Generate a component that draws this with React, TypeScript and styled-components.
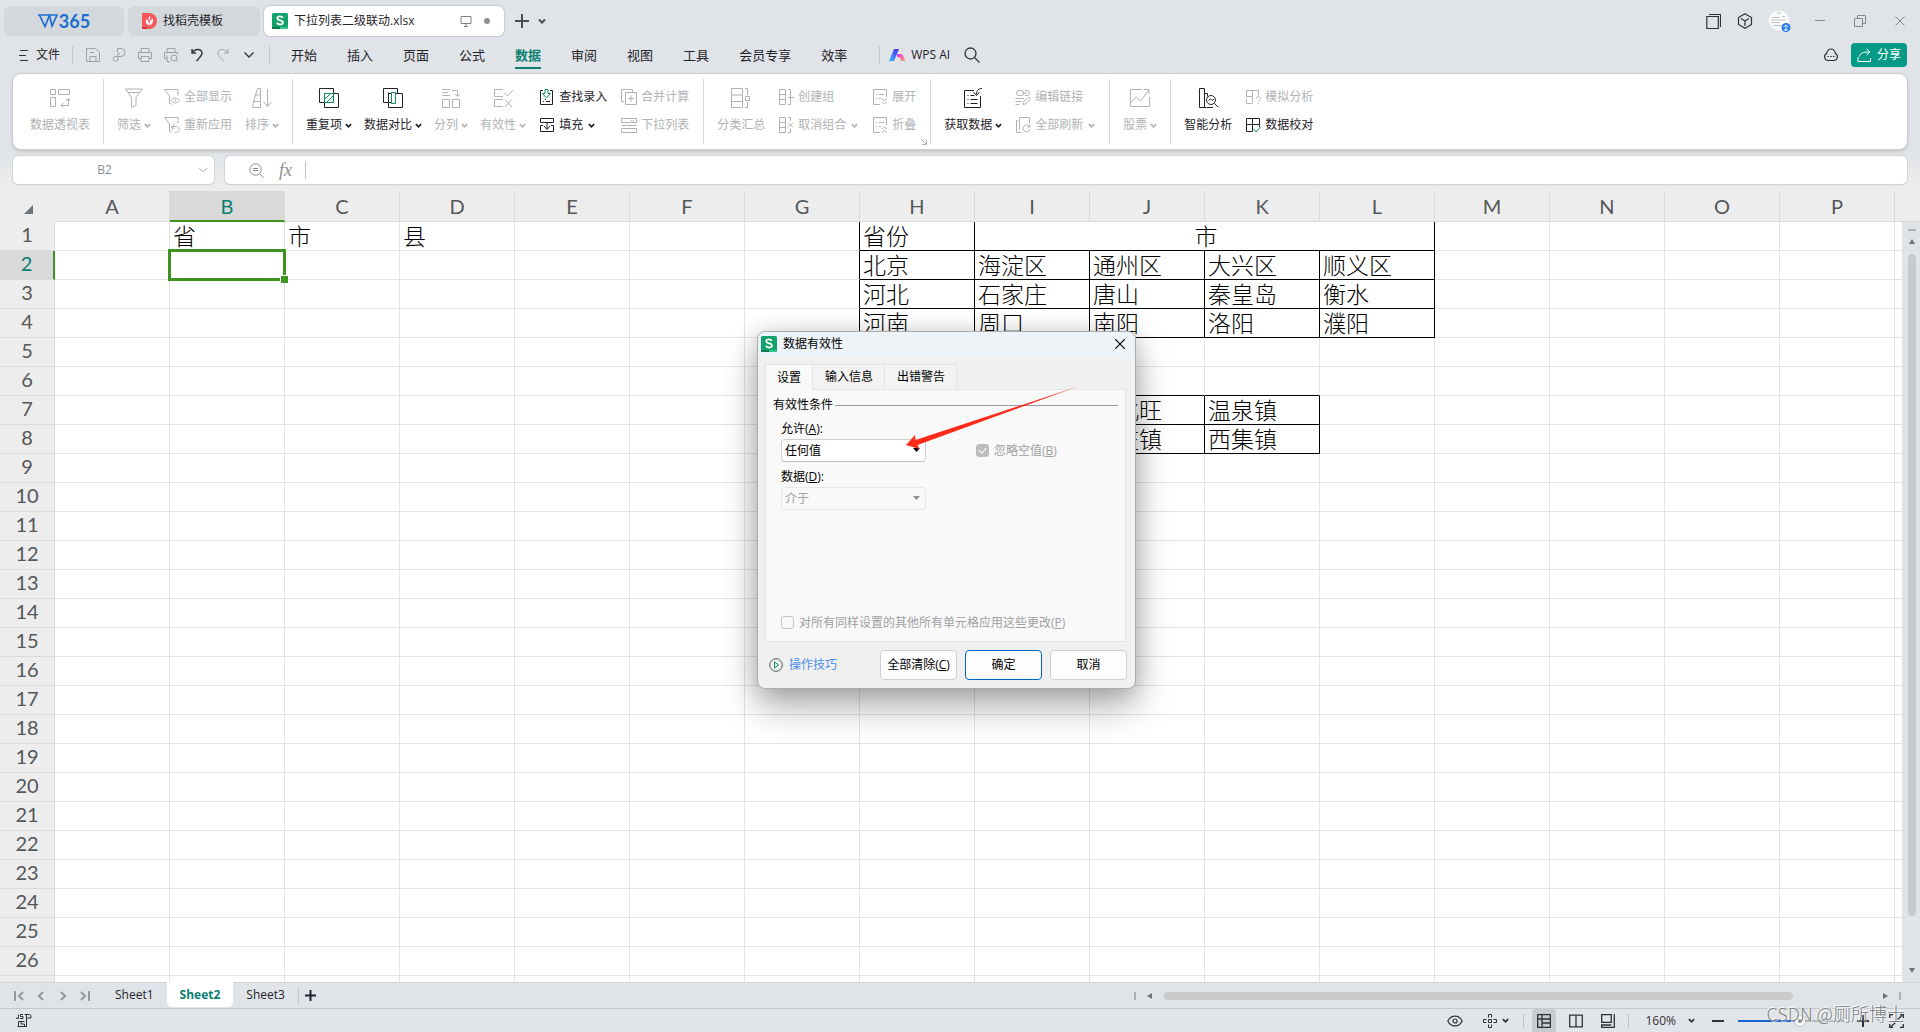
import React from "react";
import styled, { createGlobalStyle, css } from "styled-components";

const ui = `"Open Sans", "Noto Sans CJK SC", sans-serif`;
const ink = "#1f2329";
const muted = "#b0b2b4";
const green = "#0a8071";
const pick = "#3f9320";

const Global = createGlobalStyle`
  * { box-sizing: border-box; }
  body { margin: 0; font-family: ${ui}; font-size: 12px; line-height: 16px; color: ${ink}; }
  button, input, select { font: inherit; color: inherit; margin: 0; }
  button { border: 0; background: none; padding: 0; }
  svg { display: block; flex: none; }
`;

const App = styled.div`
  position: relative;
  display: flex;
  flex-direction: column;
  height: 100vh;
  overflow: hidden;
  background: linear-gradient(#e0e4e8 0, #e0e4e8 150px, #ededed 190px);
  white-space: nowrap;
`;

/* ---------- icons ---------- */

type IconProps = { w?: number; h?: number; d: string; accent?: string; color?: string; sw?: number };

function Icon({ w = 16, h, d, accent, color = "currentColor", sw = 1 }: IconProps) {
  const hh = h ?? w;
  return (
    <svg width={w} height={hh} viewBox={`0 0 ${w} ${hh}`} fill="none" stroke={color} strokeWidth={sw} aria-hidden="true">
      <path d={d} />
      {accent && <path d={accent} stroke="#0f9063" />}
    </svg>
  );
}

const Chevron = ({ w = 7, color = "currentColor", sw = 2 }: { w?: number; color?: string; sw?: number }) => (
  <svg width={w} height={w} viewBox="0 0 8 8" fill="none" stroke={color} strokeWidth={sw} aria-hidden="true">
    <path d="M1 2.5l3 3 3-3" />
  </svg>
);

const SheetLogo = () => (
  <svg width="16" height="16" viewBox="0 0 16 16" aria-hidden="true">
    <rect width="16" height="16" rx="1.5" fill="#12a06b" />
    <path d="M0 14h8v2H1.500A1.500 1.500 0 0 1 0 14z" fill="#0b7a50" />
    <path d="M8 14h8a1.500 1.500 0 0 1-1.500 2H8z" fill="#35c58d" />
    <path d="M10.800 4.800C10.300 3.700 9.200 3.300 8 3.300c-1.600 0-2.700.7-2.700 2 0 2.900 5.600 1.300 5.600 4.100 0 1.400-1.300 2.100-2.900 2.100-1.400 0-2.600-.5-3-1.700" fill="none" stroke="#fff" strokeWidth="1.800" />
  </svg>
);

/* ---------- title bar ---------- */

const TitleBar = styled.header`
  display: flex;
  align-items: center;
  height: 37px;
  padding: 5px 15px 0 4px;
  gap: 4px;
`;

const DocTab = styled.button<{ $w: number; $active?: boolean }>`
  display: flex;
  align-items: center;
  width: ${(p) => p.$w}px;
  height: 30px;
  padding: 0 8px;
  gap: 6px;
  border-radius: 6px;
  background: ${(p) => (p.$active ? "#fff" : "#d3d8dc")};
  ${(p) => p.$active && css`box-shadow: 0 0 2px rgba(0, 0, 0, 0.35);`}
`;

const Home = styled(DocTab)`
  justify-content: center;
  gap: 0;
  color: #1b6fd0;
  font: 18px/20px Lato, sans-serif;
  font-weight: 700;
`;

const Template = styled(DocTab)`
  padding-left: 14px;
`;

const Spacer = styled.div`
  flex: 1;
`;

const TabTools = styled.div`
  display: flex;
  align-items: center;
  gap: 9px;
  padding-left: 7px;
  color: #4a4d50;
`;

const WindowTools = styled.div<{ $gap: number; $dark?: boolean }>`
  display: flex;
  align-items: center;
  gap: ${(p) => p.$gap}px;
  color: ${(p) => (p.$dark ? "#2e3236" : "#85888b")};
`;

/* ---------- menu ---------- */

const MenuBar = styled.nav`
  display: flex;
  align-items: center;
  height: 37px;
  padding: 0 13px 1px 19px;
`;

const FileButton = styled.button`
  display: flex;
  align-items: center;
  gap: 8px;
  width: 53px;
`;

const Rule = styled.span<{ $l?: number; $r?: number }>`
  width: 1px;
  height: 18px;
  margin: 0 ${(p) => p.$r ?? 0}px 0 ${(p) => p.$l ?? 0}px;
  background: #c3c7ca;
`;

const QuickButton = styled.button<{ $dim?: boolean }>`
  display: flex;
  justify-content: center;
  width: 26px;
  color: ${(p) => (p.$dim ? "#9da1a4" : "#33373a")};
`;

const MenuTab = styled.button<{ $on?: boolean }>`
  position: relative;
  padding: 4px 15px;
  font-size: 13px;
  line-height: 20px;
  color: ${(p) => (p.$on ? green : ink)};
  font-weight: ${(p) => (p.$on ? 700 : 400)};
  ${(p) =>
    p.$on &&
    css`
      &::after {
        content: "";
        position: absolute;
        left: 15px;
        right: 15px;
        bottom: 0;
        height: 2px;
        background: ${green};
      }
    `}
`;

const AiButton = styled.button`
  display: flex;
  align-items: center;
  gap: 6px;
  margin-right: 14px;
`;

const ShareButton = styled.button`
  display: flex;
  align-items: center;
  gap: 5px;
  height: 24px;
  padding: 0 6px;
  margin-left: 12px;
  border-radius: 4px;
  background: #049a85;
  color: #fff;
`;

/* ---------- ribbon ---------- */

const Ribbon = styled.section`
  display: flex;
  height: 75px;
  margin: 0 13px;
  border-radius: 8px;
  background: #fff;
  box-shadow: 0 0 1px 1px #c9cdd0, 0 2px 3px 1px rgba(0, 0, 0, 0.12);
`;

const Group = styled.div<{ $first?: boolean }>`
  position: relative;
  display: flex;
  gap: 12px;
  padding: 14px 13px 0 ${(p) => (p.$first ? 17 : 13)}px;
  &:not(:last-child)::after {
    content: "";
    position: absolute;
    right: -1px;
    top: 5px;
    bottom: 5px;
    width: 1px;
    background: #d4d6d8;
  }
  & + & {
    margin-left: 1px;
  }
`;

const Big = styled.button<{ $dim?: boolean }>`
  display: flex;
  flex-direction: column;
  align-items: center;
  align-self: flex-start;
  gap: 9px;
  color: ${(p) => (p.$dim ? muted : ink)};
`;

const Label = styled.span<{ $gap?: number }>`
  display: flex;
  align-items: center;
  gap: ${(p) => p.$gap ?? 3}px;
  line-height: 16px;
`;

const Column = styled.div`
  display: flex;
  flex-direction: column;
  gap: 12px;
  padding: 1px 1px 0;
`;

const Small = styled.button<{ $dim?: boolean }>`
  display: flex;
  align-items: center;
  gap: 4px;
  color: ${(p) => (p.$dim ? muted : ink)};
`;

const Launcher = styled.span`
  position: absolute;
  right: 3px;
  bottom: 4px;
  color: ${muted};
`;

type Cmd = { t: string; d: string; a?: string; drop?: boolean; dim?: boolean };

const BigCmd = ({ t, d, a, drop, dim }: Cmd) => (
  <Big $dim={dim}>
    <Icon w={20} d={d} accent={a} />
    <Label>
      {t}
      {drop && <Chevron />}
    </Label>
  </Big>
);

const SmallCmd = ({ t, d, a, drop, dim }: Cmd) => (
  <Small $dim={dim}>
    <Icon w={16} d={d} accent={a} />
    <Label $gap={5}>
      {t}
      {drop && <Chevron />}
    </Label>
  </Small>
);

const I = {
  pivot: "M.5 1.500h5v5h-5zM8.500 1.500h11v5h-11zM.5 9.500h5v9h-5zM11 17.500h7.500v-7M13.500 15l-2.500 2.500 2.500 2.500M16 13l2.500-2.500L20 13",
  funnel: "M1.500 1h17l-6.500 8v8.500l-4.500 2V9zM4 4.500h12",
  funnelEye: "M14 6.500V.5H.5l5 6.500v7l2 1.500M7 11.500c2-3.300 6-3.300 8.500 0-2.500 3.300-6.500 3.300-8.500 0zM11.200 10.500v2",
  funnelBack: "M14 6.500V.5H.5l5 6.500v7l2 1.500M8 9v4M8 9.500h4.500c3.500 0 3.500 6 0 6H11M10.500 7L8 9.500l2.500 2.500",
  sort: "M.5 19.500h8v-6h-7zM1.500 13.500l4-13h3v13M4 7h4.500M15.500 1v17M11.500 14l4 4.500 4-4.500",
  dup: "M5 14.500H.5V.5h14V5M5.500 5.500h14v14h-14z",
  dupA: "M5.500 5.500h9v9h-9zM6 11l5-5M8 14l6-6",
  cmp: "M5 14.500H.5V.5h14V5M5.500 5.500v-1M8 5.500H5.500v9H8M12 5.500h7.500v14h-14V15",
  cmpA: "M8.500 4.500h4v11h-4z",
  split: "M1 1.500h8M1 4.500h6M1 7.500h8M11 2.500h5.500V8M14 6l2.500 2.500L19 6M1.500 11.500h7v8h-7zM11.500 11.500h7v8h-7z",
  valid: "M10 1.500H1.500v7H10M10 11.500H1.500v7H10M11 4.500l3.500 3.500L20 2M12 11.500l7 7.500M19 11.500L12 19",
  find: "M4 1.500H1.500v14h12v-14H11M4 12.500h1M7 12.500h4M6 10.500h1",
  findA: "M6 .5h3v4h2.500l-4 4.500-4-4.500H6z",
  fill: "M4 5.500H1.500v-4h13v4H12M4 8.500H1.500v6h13v-6H12M8 5v7M5 9l3 3.500L11 9M4 5.500h8",
  merge: "M3 12.500H.5V.5h11V3M4.500 3.500h11v12h-11zM10 6.500v6M7 9.500h6",
  list: "M.5 1.500h15v4H.5zM.5 8.500h15M.5 11.500h15v4H.5zM10 3l1.500 1.500L13 3",
  subtotal: "M.5.5h11v19H.5zM.5 7h11M.5 13.500h11M14 .5h2.500V7M14.500 8.500h4v4h-4zM14 19.500h2.500V14",
  group: "M1.500.5h6v15h-6zM1.500 5.500h6M1.500 10.500h6M10 .5h2.500V5M10 15.500h2.500V11M10 8.500h6M12.500 5.500v6",
  ungroup: "M1.500.5h6v15h-6zM1.500 5.500h6M1.500 10.500h6M10 .5h2.500V4M10 15.500h2.500V12M10 5.500l5 5M15 5.500l-5 5",
  expand: "M8 15.500H1.500V.5h13V8M4 5.500h1M7 5.500h5M4 9.500h1M7 9.500h2M10 9.500l2.500 2 2.500-2M10 13l2.500 2 2.500-2",
  collapse: "M8 15.500H1.500V.5h13V8M4 5.500h1M7 5.500h5M4 9.500h1M7 9.500h2M10 12l2.500-2 2.500 2M10 15.500l2.500-2 2.500 2",
  getData: "M11 2.500H1.500v17h16V8M4.500 7.500h1M7.500 7.500h4M4.500 11.500h1M7.500 11.500h7M4.500 15.500h1M7.500 15.500h7M19 .5c-3 0-5.500 1.500-5.500 6M10.500 4l3 3.500 3-3.500",
  link: "M4 1.500h2.500a2.500 2.500 0 0 1 0 5H4a2.500 2.500 0 0 1 0-5zM7 4h5M10 1.500h2a2.500 2.500 0 0 1 0 5h-2M.5 9.500H9M.5 12.500h6M.5 15.500h4M8 15.500l.5-2.500 5-5 2 2-5 5z",
  refresh: "M4.500 13V.5h10V6M3 3.500H1.500v12H6M14.500 9.500A3.500 3.500 0 1 0 15 12M15 7.500v2.500h-2.500",
  stock: "M12 1.500H.5v17h19V9M1 14l5.500-5 4 4 8.500-11M14 1.500h5v5",
  smart: "M8.500 19.500h-7V.5h5v19M9 19.500h6M6.500 5.500h3v3M13 7.500a4.500 4.500 0 1 1 0 9 4.500 4.500 0 0 1 0-9zM16.300 15.300l3.700 3.700M10.500 12.500l2-1.500 1.500 1.500 2-1.500",
  whatif: "M1.500 1.500h6v6h-6zM7.500 1.500h6v5M7.500 7.500v6M1.500 9.500v5h6M11.500 9.500c0-2.500 4-2.500 4 0 0 1.500-2 1.500-2 3M13.500 14v1.500",
  check: "M7.500 14.500h-6v-13h13v6h-13M7.500 1.500v13M11 7.500h3.500V10",
  checkA: "M8.500 12l2.500 3L15.500 10",
};

/* ---------- formula bar ---------- */

const FormulaRow = styled.div`
  display: flex;
  gap: 11px;
  height: 42px;
  padding: 7px 13px;
`;

const Field = styled.label<{ $w?: number }>`
  display: flex;
  align-items: center;
  height: 28px;
  ${(p) => (p.$w ? `width: ${p.$w}px` : "flex: 1")};
  padding: 0 6px;
  border-radius: 5px;
  background: #fff;
  box-shadow: 0 0 0 1px #d2d5d7, 0 1px 1px rgba(0, 0, 0, 0.2);
  color: #8a8d90;
`;

const Bare = styled.input<{ $center?: boolean }>`
  flex: 1;
  min-width: 0;
  border: 0;
  outline: 0;
  background: none;
  text-align: ${(p) => (p.$center ? "center" : "left")};
  padding: 0 ${(p) => (p.$center ? 8 : 0)}px 0 ${(p) => (p.$center ? 0 : 4)}px;
`;

const Fx = styled.span`
  margin: 0 13px 0 15px;
  font: italic 18px/20px "Liberation Serif", serif;
`;

const FxWrap = styled.span`
  display: flex;
  align-items: center;
  padding-left: 18px;
`;

/* ---------- sheet ---------- */

const SheetArea = styled.main`
  display: flex;
  flex: 1;
  min-height: 0;
  background: #ededed;
`;

const Viewport = styled.div`
  flex: 1;
  min-width: 0;
  overflow: hidden;
`;

const Grid = styled.table`
  width: 100%;
  table-layout: fixed;
  border-collapse: separate;
  border-spacing: 0;
`;

const head = css`
  padding: 0;
  font: 20px/24px Lato, sans-serif;
  color: #555759;
  border: 0 solid #d9dadb;
  border-right-width: 1px;
  border-bottom-width: 1px;
`;

const Corner = styled.td`
  height: 31px;
  padding: 6px 0 0 24px;
`;

const ColHead = styled.th<{ $on?: boolean; $plain?: boolean }>`
  ${head}
  height: 31px;
  ${(p) => p.$plain && "border-right: 0;"}
  ${(p) => p.$on && css`background: #d9d9d9; color: ${green}; border-bottom: 2px solid ${pick}; padding-top: 1px;`}
`;

const RowHead = styled.th<{ $on?: boolean }>`
  ${head}
  height: 29px;
  vertical-align: top;
  ${(p) => p.$on && css`background: #d9d9d9; color: ${green}; border-right: 2px solid ${pick};`}
`;

const Cell = styled.td<{ $r?: boolean; $b?: boolean; $center?: boolean }>`
  position: relative;
  height: 29px;
  padding: 2px 0 0 3px;
  background: #fff;
  border: 0 solid #e2e3e4;
  border-right: 1px solid ${(p) => (p.$r ? "#000" : "#e2e3e4")};
  border-bottom: 1px solid ${(p) => (p.$b ? "#000" : "#e2e3e4")};
  font: 300 23px/26px "Liberation Sans", "Noto Sans CJK SC", sans-serif;
  color: #000;
  text-align: ${(p) => (p.$center ? "center" : "left")};
`;

const Selection = styled.span`
  position: absolute;
  inset: -2px;
  z-index: 1;
  border: 3px solid ${pick};
  &::after {
    content: "";
    position: absolute;
    right: -5px;
    bottom: -5px;
    width: 7px;
    height: 7px;
    background: ${pick};
    border: solid #fff;
    border-width: 1px 0 0 1px;
  }
`;

const VScroll = styled.div`
  display: flex;
  flex-direction: column;
  align-items: center;
  width: 17px;
  margin-top: 30px;
  padding: 7px 0 9px 1px;
  border-top: 1px solid #d9dadb;
  background: #e0e4e7;
`;

const VTrack = styled.div`
  flex: 1;
  margin: 9px 0 10px;
`;

const Thumb = styled.div<{ $vertical?: boolean }>`
  border-radius: 4px;
  background: #c8cacc;
  ${(p) => (p.$vertical ? "width: 8px; height: 94%;" : "height: 8px; width: 89%;")}
`;

const Grip = styled.span<{ $vertical?: boolean }>`
  ${(p) => (p.$vertical ? "width: 2px; height: 8px;" : "width: 8px; height: 2px;")}
  background: #adb0b2;
`;

/* ---------- bottom ---------- */

const TabsBar = styled.div`
  display: flex;
  align-items: center;
  height: 26px;
  padding: 0 19px 0 8px;
  border-top: 1px solid #d4d6d8;
  background: #e0e3e7;
`;

const NavButton = styled.button`
  display: flex;
  justify-content: center;
  width: 22px;
  color: #94979a;
`;

const SheetTab = styled.button<{ $on?: boolean }>`
  height: 24px;
  align-self: flex-start;
  padding: 0 13px;
  border-radius: 0 0 5px 5px;
  ${(p) => p.$on && css`background: #fff; color: ${green}; font-weight: 700; margin-top: -1px; height: 25px;`}
`;

const TabList = styled.div`
  display: flex;
  align-items: center;
  height: 100%;
  padding-left: 6px;
`;

const HScroll = styled.div`
  display: flex;
  align-items: center;
  width: calc(40% + 10px);
  gap: 11px;
  color: #717476;
`;

const HTrack = styled.div`
  flex: 1;
`;

const StatusBar = styled.footer`
  display: flex;
  align-items: center;
  height: 24px;
  padding: 0 16px;
  border-top: 1px solid #c6c9cc;
  background: #e1e4e8;
  color: #2f3336;
`;

const StatusTools = styled.div<{ $gap: number }>`
  display: flex;
  align-items: center;
  gap: ${(p) => p.$gap}px;
`;

const StatusRule = styled.span`
  width: 1px;
  height: 14px;
  background: #c0c3c6;
`;

const ViewGroup = styled.div`
  display: flex;
  align-items: center;
  gap: 8px;
  padding: 0 8px 0 14px;
`;

const ViewButton = styled.button<{ $on?: boolean }>`
  display: flex;
  align-items: center;
  justify-content: center;
  width: 24px;
  height: 24px;
  border-radius: 4px;
  background: ${(p) => (p.$on ? "#c9cccf" : "none")};
`;

const Zoom = styled.input`
  appearance: none;
  width: 105px;
  height: 10px;
  background: linear-gradient(#1763d3, #1763d3) 0 4px / 60% 2px no-repeat, linear-gradient(#b6b9bc, #b6b9bc) 0 4px / 100% 2px no-repeat;
  &::-webkit-slider-thumb {
    appearance: none;
    width: 10px;
    height: 10px;
    border-radius: 50%;
    border: 3px solid #fff;
    background: #8a8d90;
    box-shadow: 0 0 2px rgba(0, 0, 0, 0.4);
  }
`;

const Watermark = styled.span`
  position: absolute;
  right: 15px;
  bottom: 7px;
  font: 300 18px/24px "Noto Sans CJK SC", sans-serif;
  color: #7b7d80;
  text-shadow: -1px -1px 0 rgba(255, 255, 255, 0.8), 1px 1px 0 rgba(255, 255, 255, 0.5);
  pointer-events: none;
`;

/* ---------- dialog ---------- */

const Dialog = styled.section`
  position: absolute;
  left: 757px;
  top: 331px;
  z-index: 2;
  width: 379px;
  border: 1px solid #a9abad;
  border-radius: 8px;
  background: #f0f0f0;
  box-shadow: 0 18px 36px rgba(0, 0, 0, 0.3), 0 2px 22px rgba(0, 0, 0, 0.16);
  color: #000;
`;

const DialogTitle = styled.header`
  display: flex;
  align-items: center;
  gap: 6px;
  height: 24px;
  padding: 0 10px 0 3px;
  border-radius: 8px 8px 0 0;
  background: #eef3f8;
`;

const DialogTabs = styled.div`
  display: flex;
  align-items: flex-end;
  margin: 8px 9px 0 7px;
`;

const DialogTab = styled.button<{ $on?: boolean }>`
  padding: 0 11px;
  height: ${(p) => (p.$on ? 26 : 25)}px;
  border: 1px solid #e4e4e4;
  border-bottom: 0;
  background: ${(p) => (p.$on ? "#f9f9f9" : "#f3f3f3")};
  ${(p) => p.$on && "position: relative; margin-bottom: -1px;"}
  & + & {
    border-left: 0;
    padding: 0 11px 0 12px;
  }
`;

const Panel = styled.div`
  display: flex;
  flex-direction: column;
  height: 253px;
  margin: 0 9px 0 7px;
  padding: 7px 7px 11px;
  border: 1px solid #e4e4e4;
  background: #f9f9f9;
`;

const Legend = styled.h3`
  display: flex;
  align-items: center;
  gap: 2px;
  margin: 0 0 8px;
  font-size: 12px;
  font-weight: 400;
  line-height: 16px;
  &::after {
    content: "";
    flex: 1;
    height: 1px;
    background: #9c9c9c;
  }
`;

const Form = styled.div`
  display: grid;
  grid-template-columns: 145px 1fr;
  column-gap: 50px;
  padding-left: 8px;
`;

const FieldLabel = styled.label`
  grid-column: 1 / -1;
  height: 18px;
`;

const Combo = styled.div<{ $off?: boolean }>`
  position: relative;
  margin-bottom: 7px;
  color: ${(p) => (p.$off ? "#a0a0a0" : "#000")};
  & > select {
    display: block;
    appearance: none;
    width: 100%;
    height: 23px;
    padding: 0 20px 0 3px;
    border: 1px solid ${(p) => (p.$off ? "#e6e6e6" : "#cfcfcf")};
    border-bottom-color: ${(p) => (p.$off ? "#e6e6e6" : "#bdbdbd")};
    border-radius: 4px;
    background: ${(p) => (p.$off ? "#f9f9f9" : "#fff")};
    opacity: 1;
  }
  & > svg {
    position: absolute;
    right: 6px;
    top: 9px;
  }
`;

const Tick = styled.label`
  display: flex;
  align-items: center;
  gap: 5px;
  height: 23px;
  color: #a0a0a0;
  & > input {
    position: relative;
    appearance: none;
    width: 13px;
    height: 13px;
    border: 1px solid #c4c4c4;
    border-radius: 3px;
  }
  & > input:checked {
    background: #bdbdbd;
    border-color: #bdbdbd;
  }
  & > input:checked::after {
    content: "";
    position: absolute;
    left: 3px;
    top: 1px;
    width: 4px;
    height: 6px;
    border: solid #fff;
    border-width: 0 1px 1px 0;
    transform: rotate(40deg);
  }
`;

const BottomTick = styled(Tick)`
  margin-top: auto;
  height: 15px;
  padding-left: 8px;
`;

const DialogFoot = styled.footer`
  display: flex;
  align-items: center;
  gap: 8px;
  padding: 8px 8px 8px 11px;
`;

const TipLink = styled.a`
  display: flex;
  align-items: center;
  gap: 6px;
  margin-right: auto;
  color: #4b8fe8;
  text-decoration: none;
`;

const DialogButton = styled.button<{ $main?: boolean }>`
  width: 77px;
  height: 30px;
  border: 1px solid ${(p) => (p.$main ? "#0067c0" : "#cfcfcf")};
  border-radius: 4px;
  background: #fdfdfd;
`;

const Arrow = styled.svg`
  position: absolute;
  left: 147px;
  top: 53px;
  pointer-events: none;
`;

/* ---------- data ---------- */

const letters = "ABCDEFGHIJKLMNOP".split("");
const rows = Array.from({ length: 27 }, (_, i) => i + 1);

const values: Record<string, string> = {
  B1: "省", C1: "市", D1: "县",
  H1: "省份", I1: "市",
  H2: "北京", I2: "海淀区", J2: "通州区", K2: "大兴区", L2: "顺义区",
  H3: "河北", I3: "石家庄", J3: "唐山", K3: "秦皇岛", L3: "衡水",
  H4: "河南", I4: "周口", J4: "南阳", K4: "洛阳", L4: "濮阳",
  J7: "西北旺", K7: "温泉镇",
  J8: "宋庄镇", K8: "西集镇",
};

const boxed = (c: number, r: number) => (r >= 1 && r <= 4 && c >= 7 && c <= 11) || ((r === 7 || r === 8) && c >= 9 && c <= 10);

const tabs = ["开始", "插入", "页面", "公式", "数据", "审阅", "视图", "工具", "会员专享", "效率"];

function SheetRow({ r }: { r: number }) {
  return (
    <tr>
      <RowHead scope="row" $on={r === 2}>{r}</RowHead>
      {letters.map((l, c) => {
        if (r === 1 && c > 8 && c < 12) return null;
        const merged = r === 1 && c === 8;
        const last = merged ? 11 : c;
        return (
          <Cell
            key={l}
            colSpan={merged ? 4 : 1}
            $center={merged}
            $r={boxed(last, r) || boxed(last + 1, r)}
            $b={boxed(c, r) || boxed(c, r + 1)}
          >
            {values[l + r]}
            {l + r === "B2" && <Selection />}
          </Cell>
        );
      })}
      <Cell />
    </tr>
  );
}

const AiLogo = () => (
  <svg width="16" height="12" viewBox="0 0 16 12" aria-hidden="true">
    <defs>
      <linearGradient id="aiBlue" x1="0" y1="1" x2="1" y2="0">
        <stop offset="0" stopColor="#35b6ff" />
        <stop offset="1" stopColor="#4a2be8" />
      </linearGradient>
      <linearGradient id="aiPink" x1="0" y1="0" x2="1" y2="1">
        <stop offset="0" stopColor="#e22bf0" />
        <stop offset="1" stopColor="#ffa56b" />
      </linearGradient>
    </defs>
    <path d="M5 0h5L5 12H0z" fill="url(#aiBlue)" />
    <path d="M8 5h4c1.500 0 4 4 4 7h-4c0-3-1.500-4-4-4z" fill="url(#aiPink)" />
  </svg>
);

export default function SpreadsheetApp() {
  return (
    <App>
      <Global />
      <TitleBar>
        <Home $w={120}>
          <svg width="21" height="14" viewBox="0 0 21 14" fill="none" stroke="#1b6fd0" strokeWidth="1.700" aria-hidden="true">
            <path d="M0 1h11.500L7 12.500 1.500 1M11.500 1L14 12 19 1h-6.500" />
          </svg>
          365
        </Home>
        <Template $w={132}>
          <svg width="15" height="16" viewBox="0 0 15 16" aria-hidden="true">
            <path d="M0 0h7a8 8 0 0 1 0 16H0z" fill="#f5575b" />
            <path d="M0 14h5v2H0z" fill="#d93438" />
            <path d="M7 12.500C3.500 11 3.500 8 4 6.500c2 .5 3 2 3 6zM7.500 12.500C11 11 11.500 8 11 5.500 8 7 7 9 7.500 12.500zM6.800 7.500C6 6 6.500 4 8 3c.8 1.500.5 3-1.200 4.500z" fill="#fff" />
          </svg>
          找稻壳模板
        </Template>
        <DocTab $w={240} $active>
          <SheetLogo />
          下拉列表二级联动.xlsx
          <Spacer />
          <Icon w={12} d="M1 1.500h10v7H1zM4 11.500h4M6 9v2" color="#7d8184" />
          <svg width="18" height="6" viewBox="0 0 18 6" aria-hidden="true"><circle cx="9" cy="3" r="3" fill="#8d9093" /></svg>
        </DocTab>
        <TabTools>
          <Icon w={14} d="M7 0v14M0 7h14" sw={2} />
          <Chevron w={8} />
        </TabTools>
        <Spacer />
        <WindowTools $gap={24}>
          <WindowTools $gap={16} $dark>
            <Icon w={15} d="M.8 2.500h11.500v12H.8zM3 .5h11.500V13" sw={1.2} />
            <Icon w={16} d="M8 .8l6.500 3.700v7L8 15.200 1.500 11.500v-7zM4 5.500l4 2.500 4-2.500M8 8v5" sw={1.2} />
            <svg width="22" height="22" viewBox="0 0 22 22" aria-hidden="true">
              <circle cx="10" cy="10.500" r="10" fill="#fbfbfb" />
              <path d="M8 3h4M3 7.500h8M13 6.500h3M2 10h15M2 12.500h9M4 15.500h8" stroke="#bfc1c3" />
              <circle cx="17" cy="17.500" r="4.500" fill="#2277f0" />
              <path d="M14.500 17l2.500-2 2.500 2M17 16.500v4M15 20h4" stroke="#fff" fill="none" />
            </svg>
          </WindowTools>
          <WindowTools $gap={29}>
            <Icon w={10} d="M0 4.500h10" />
            <Icon w={12} d="M.5 3.500h8v8h-8zM3.500 3V.5h8v8H9" />
            <Icon w={10} d="M.5.5l9 9M9.500.5l-9 9" />
          </WindowTools>
        </WindowTools>
      </TitleBar>

      <MenuBar>
        <FileButton>
          <Icon w={9} h={11} d="M1 .5h8M0 5.500h7M1 10.500h8" color="#2f3336" />
          文件
        </FileButton>
        <Rule $r={7} />
        <QuickButton $dim aria-label="保存"><Icon w={14} d="M.5.5h9l4 4v9H.5zM4 13.500V8.500h6v5M4 4.500h4" /></QuickButton>
        <QuickButton $dim aria-label="输出"><Icon w={14} d="M5.500 4V.5h3.500a3.500 3.500 0 0 1 0 8H3.500a2.400 2.400 0 1 0 2.500 2.500V5.500H8" /></QuickButton>
        <QuickButton $dim aria-label="打印"><Icon w={14} d="M3 4V.5h8V4M3 10.500H.5V4.500h13v6H11M3 8.500h8v5H3z" /></QuickButton>
        <QuickButton $dim aria-label="打印预览"><Icon w={15} h={14} d="M3 4V.5h8V4M3 10.500H.5V4.500h13v2M3 7.500v6h3M10 7a3 3 0 1 1 0 6 3 3 0 0 1 0-6zM12.300 12l2.200 2" /></QuickButton>
        <QuickButton aria-label="撤销"><Icon w={12} h={14} d="M1 1v4h4M1 5C3 1 10 0 11 4.500 11.500 7.500 9 9 5.500 13" sw={1.4} /></QuickButton>
        <QuickButton $dim aria-label="恢复"><Icon w={12} h={14} d="M11 1v4H7M11 5C9 1 2 0 1 4.500.5 7.500 3 9 6.500 13" /></QuickButton>
        <QuickButton aria-label="更多"><Icon w={10} h={8} d="M.5 1.500L5 6l4.500-4.500" sw={1.4} /></QuickButton>
        <Rule $l={7} $r={6} />
        {tabs.map((t) => (
          <MenuTab key={t} $on={t === "数据"}>{t}</MenuTab>
        ))}
        <Rule $l={17} $r={9} />
        <AiButton>
          <AiLogo />
          WPS AI
        </AiButton>
        <Icon w={16} d="M6.500 1a5.500 5.500 0 1 1 0 11 5.500 5.500 0 0 1 0-11zM10.500 10.500L15.500 15.500" sw={1.3} color="#33373a" />
        <Spacer />
        <WindowTools $gap={0} $dark>
          <Icon w={16} h={14} d="M4.500 12.500a3.800 3.800 0 0 1-1-7C4.500 2 6 1 8 1s3.500 1 4.500 4.500a3.800 3.800 0 0 1-1 7zM4.500 8.500h1.500M7.300 8.500h1.500M10 8.500h1.500" sw={1.2} />
        </WindowTools>
        <ShareButton>
          <Icon w={15} d="M1 9v4.500h12.500V10M2.500 8.500C3 5 6 4 12 4M9.500 1l3.500 3-3.500 3" />
          分享
        </ShareButton>
      </MenuBar>

      <Ribbon>
        <Group $first>
          <BigCmd t="数据透视表" d={I.pivot} dim />
        </Group>
        <Group>
          <BigCmd t="筛选" d={I.funnel} drop dim />
          <Column>
            <SmallCmd t="全部显示" d={I.funnelEye} dim />
            <SmallCmd t="重新应用" d={I.funnelBack} dim />
          </Column>
          <BigCmd t="排序" d={I.sort} drop dim />
        </Group>
        <Group>
          <BigCmd t="重复项" d={I.dup} a={I.dupA} drop />
          <BigCmd t="数据对比" d={I.cmp} a={I.cmpA} drop />
          <BigCmd t="分列" d={I.split} drop dim />
          <BigCmd t="有效性" d={I.valid} drop dim />
          <Column>
            <SmallCmd t="查找录入" d={I.find} a={I.findA} />
            <SmallCmd t="填充" d={I.fill} drop />
          </Column>
          <Column>
            <SmallCmd t="合并计算" d={I.merge} dim />
            <SmallCmd t="下拉列表" d={I.list} dim />
          </Column>
        </Group>
        <Group>
          <BigCmd t="分类汇总" d={I.subtotal} dim />
          <Column>
            <SmallCmd t="创建组" d={I.group} dim />
            <SmallCmd t="取消组合" d={I.ungroup} drop dim />
          </Column>
          <Column>
            <SmallCmd t="展开" d={I.expand} dim />
            <SmallCmd t="折叠" d={I.collapse} dim />
          </Column>
          <Launcher><Icon w={6} d="M0 0l5 5M5.500 1v4.500H1" /></Launcher>
        </Group>
        <Group>
          <BigCmd t="获取数据" d={I.getData} drop />
          <Column>
            <SmallCmd t="编辑链接" d={I.link} dim />
            <SmallCmd t="全部刷新" d={I.refresh} drop dim />
          </Column>
        </Group>
        <Group>
          <BigCmd t="股票" d={I.stock} drop dim />
        </Group>
        <Group>
          <BigCmd t="智能分析" d={I.smart} />
          <Column>
            <SmallCmd t="模拟分析" d={I.whatif} dim />
            <SmallCmd t="数据校对" d={I.check} a={I.checkA} />
          </Column>
        </Group>
      </Ribbon>

      <FormulaRow>
        <Field $w={201}>
          <Bare $center defaultValue="B2" aria-label="名称框" />
          <Chevron w={10} sw={0.8} color="#a5a8ab" />
        </Field>
        <Field>
          <FxWrap>
            <Icon w={15} d="M6.500.8a5.700 5.700 0 1 1 0 11.400 5.700 5.700 0 0 1 0-11.400zM10.500 10.500l4 4M4 5.500h5M4 7.500h5" />
            <Fx>fx</Fx>
            <Rule />
          </FxWrap>
          <Bare aria-label="编辑栏" />
        </Field>
      </FormulaRow>

      <SheetArea>
        <Viewport>
          <Grid>
            <colgroup>
              <col width="55" />
              {letters.map((l) => <col key={l} width="115" />)}
              <col />
            </colgroup>
            <thead>
              <tr>
                <Corner><svg width="9" height="9" viewBox="0 0 9 9" aria-hidden="true"><path d="M9 0v9H0z" fill="#6f7274" /></svg></Corner>
                {letters.map((l) => <ColHead key={l} scope="col" $on={l === "B"}>{l}</ColHead>)}
                <ColHead $plain aria-hidden="true" />
              </tr>
            </thead>
            <tbody>
              {rows.map((r) => <SheetRow key={r} r={r} />)}
            </tbody>
          </Grid>
        </Viewport>
        <VScroll>
          <Grip />
          <svg width="6" height="14" viewBox="0 0 6 14" aria-hidden="true"><path d="M3 8l3 5H0z" fill="#717476" /></svg>
          <VTrack><Thumb $vertical /></VTrack>
          <svg width="6" height="5" viewBox="0 0 6 5" aria-hidden="true"><path d="M0 0h6L3 5z" fill="#717476" /></svg>
        </VScroll>
      </SheetArea>

      <TabsBar>
        <NavButton aria-label="第一个"><Icon w={10} d="M1 0v10M9 1L5 5l4 4" sw={2} /></NavButton>
        <NavButton aria-label="上一个"><Icon w={10} d="M7 1L3 5l4 4" sw={2} /></NavButton>
        <NavButton aria-label="下一个"><Icon w={10} d="M3 1l4 4-4 4" sw={2} /></NavButton>
        <NavButton aria-label="最后一个"><Icon w={10} d="M1 1l4 4-4 4M9 0v10" sw={2} /></NavButton>
        <TabList>
          <SheetTab>Sheet1</SheetTab>
          <SheetTab $on>Sheet2</SheetTab>
          <SheetTab>Sheet3</SheetTab>
          <Rule $r={6} />
          <Icon w={11} d="M5.500 0v11M0 5.500h11" sw={2} />
        </TabList>
        <Spacer />
        <HScroll>
          <Grip $vertical />
          <svg width="6" height="6" viewBox="0 0 6 6" aria-hidden="true"><path d="M5 0v6L0 3z" fill="#717476" /></svg>
          <HTrack><Thumb /></HTrack>
          <svg width="6" height="6" viewBox="0 0 6 6" aria-hidden="true"><path d="M1 0v6l5-3z" fill="#717476" /></svg>
          <Grip $vertical />
        </HScroll>
      </TabsBar>

      <StatusBar>
        <Icon w={16} h={14} d="M2.500.5v4H.5V3.500M7 .5H4.500v2H7v2H4M8.500.5h5M10.500 1v12M13.500.5c1.500 0 1.500 2.500 1.500 3.500h-4M2.500 12.500V7.500h6M1.500 12.500h8.500M5 7v3h3.500v3" />
        <Spacer />
        <StatusTools $gap={20}>
          <Icon w={16} h={12} d="M.8 6C4-.5 12-.5 15.200 6 12 12.500 4 12.500.8 6zM8 4a2 2 0 1 1 0 4 2 2 0 0 1 0-4z" sw={1.2} />
          <StatusTools $gap={5}>
            <Icon w={14} d="M5.500 3.500v-3h3v3M5.500 10.500v3h3v-3M3.500 5.500h-3v3h3M10.500 5.500h3v3h-3M5.500 5.500h3v3h-3z" />
            <Chevron />
          </StatusTools>
        </StatusTools>
        <ViewGroup>
          <StatusRule />
          <ViewButton $on aria-label="普通视图"><Icon w={14} d="M.7.7h12.600v12.600H.7zM.7 5h12.600M5 .7v12.600M5 9h8.300" sw={1.3} /></ViewButton>
          <ViewButton aria-label="分页预览"><Icon w={14} d="M.7 1.200h12.600v11.600H.7zM7 1v12" sw={1.3} /></ViewButton>
          <ViewButton aria-label="页面布局"><Icon w={14} d="M.7.7h9.600v7.600H.7zM13.300 0v13.300H.7V11h9.600" sw={1.3} /></ViewButton>
        </ViewGroup>
        <StatusTools $gap={17}>
          <StatusTools $gap={12}>
            <StatusTools $gap={16}>
              <StatusRule />
              <span>160%</span>
            </StatusTools>
            <Chevron />
          </StatusTools>
          <StatusTools $gap={14}>
            <Icon w={12} d="M0 6h12" sw={2} />
            <Zoom type="range" min={0} max={100} defaultValue={60} aria-label="缩放" />
            <StatusTools $gap={20}>
              <Icon w={12} d="M6 0v12M0 6h12" sw={2} />
              <Icon w={15} h={14} d="M.7 4V.7H4M11 .7h3.300V4M14.300 10v3.300H11M4 13.300H.7V10M8.500 5.500L13 1.500M2 12.500l4.500-4" sw={1.3} />
            </StatusTools>
          </StatusTools>
        </StatusTools>
      </StatusBar>

      <Watermark>CSDN @厕所博士</Watermark>

      <Dialog role="dialog" aria-label="数据有效性">
        <DialogTitle>
          <SheetLogo />
          数据有效性
          <Spacer />
          <button aria-label="关闭"><Icon w={10} d="M0 0l10 10M10 0L0 10" sw={1.2} /></button>
        </DialogTitle>
        <DialogTabs>
          <DialogTab $on>设置</DialogTab>
          <DialogTab>输入信息</DialogTab>
          <DialogTab>出错警告</DialogTab>
        </DialogTabs>
        <Panel>
          <Legend>有效性条件</Legend>
          <Form>
            <FieldLabel htmlFor="allow">允许(<u>A</u>):</FieldLabel>
            <Combo>
              <select id="allow"><option>任何值</option></select>
              <svg width="7" height="4" viewBox="0 0 7 4" aria-hidden="true"><path d="M0 0h7L3.500 4z" fill="#000" /></svg>
            </Combo>
            <Tick>
              <input type="checkbox" defaultChecked disabled />
              <span>忽略空值(<u>B</u>)</span>
            </Tick>
            <FieldLabel htmlFor="data">数据(<u>D</u>):</FieldLabel>
            <Combo $off>
              <select id="data" disabled><option>介于</option></select>
              <svg width="7" height="4" viewBox="0 0 7 4" aria-hidden="true"><path d="M0 0h7L3.500 4z" fill="#8e8e8e" /></svg>
            </Combo>
          </Form>
          <BottomTick>
            <input type="checkbox" disabled />
            <span>对所有同样设置的其他所有单元格应用这些更改(<u>P</u>)</span>
          </BottomTick>
        </Panel>
        <DialogFoot>
          <TipLink href="#tips">
            <Icon w={14} d="M7 .7a6.300 6.300 0 1 1 0 12.600A6.300 6.300 0 0 1 7 .7z" accent="M5.500 4v6l4-3z" color="#55585a" />
            操作技巧
          </TipLink>
          <DialogButton>全部清除(<u>C</u>)</DialogButton>
          <DialogButton $main>确定</DialogButton>
          <DialogButton>取消</DialogButton>
        </DialogFoot>
        <Arrow width="176" height="66" viewBox="0 0 176 66" aria-hidden="true">
          <path d="M1 60l9-10 .5 5L173 1.500 12.500 60l2 4z" fill="#ff2a17" />
        </Arrow>
      </Dialog>
    </App>
  );
}
